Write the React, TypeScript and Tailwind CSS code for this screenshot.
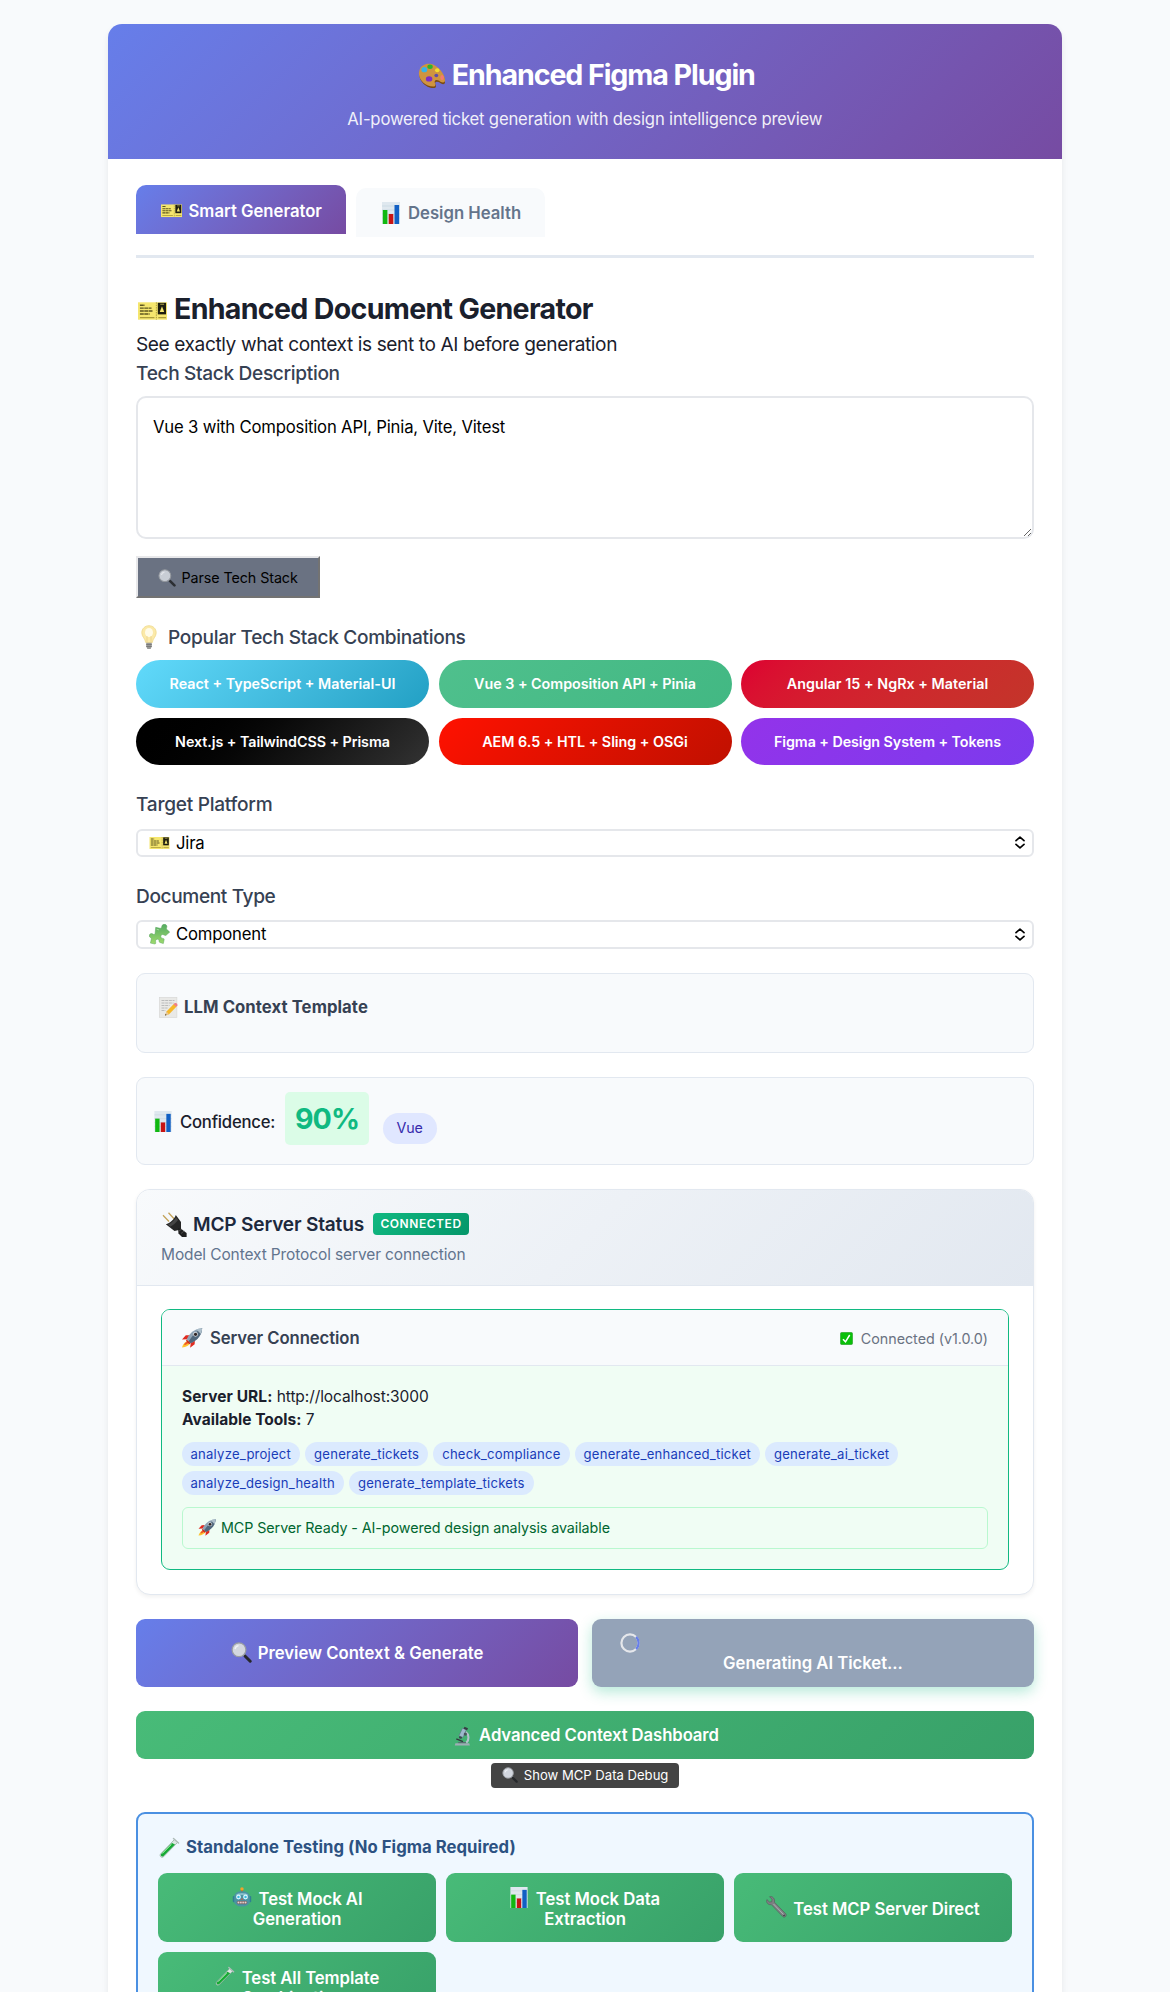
import type { ReactNode } from "react";
import clsx from "clsx";

type IconProps = { className?: string };

const Palette = ({ className }: IconProps) => (
  <svg viewBox="0 0 30 28" className={className}>
    <path d="M3 9.500C5 3 13 1 19 5c5 3 10 9.500 10 15.500 0 4-4 2.500-6 .5-2-1-5-1-4 2 1 2 1 4-2 4C9 27 0 18 3 9.500Z" fill="#7a4a12" />
    <path d="M2.500 8.500C4.500 2 13 0 19 4c5 3 10 10 10 15 0 3.500-4 2.500-6 .5-2.500-1.500-5.500-1-4.500 2 1 2.500.5 4-2 4C8.500 25.500-.5 17 2.500 8.500Z" fill="#cf9440" />
    <ellipse cx="13.500" cy="5" rx="2.800" ry="2.300" fill="#2bb52b" />
    <ellipse cx="7.500" cy="8" rx="3" ry="2.700" fill="#35b4e8" />
    <ellipse cx="12.500" cy="17.500" rx="3.400" ry="2.700" fill="#7d2fc4" />
    <ellipse cx="21" cy="8.500" rx="2.300" ry="2" fill="#f3dc2c" />
    <ellipse cx="26" cy="16" rx="1.800" ry="2.600" fill="#f47a72" />
    <ellipse cx="20" cy="14" rx="2" ry="1.800" fill="#5d4bab" />
  </svg>
);

const Ticket = ({ className }: IconProps) => (
  <svg viewBox="0 0 30 18" className={className}>
    <rect width="30" height="18" fill="#f5e66e" />
    <path d="M2 3h5M2 6h12M2 9h13M2 12h10" stroke="#5d5620" strokeWidth="1.500" strokeDasharray="4 .5" />
    <path d="M2 15.800h15M21 15.800h8" stroke="#a99a3c" strokeWidth="1.200" />
    <path d="M19 0v18" stroke="#a99a3c" strokeWidth="1" strokeDasharray="1.500 1" />
    <rect x="20.500" y="0.500" width="8.500" height="12" fill="#1d1d10" />
    <path d="M22.500 10 24.800 4l2.300 6Z" fill="#f5e66e" />
    <path d="M23 2h4" stroke="#b9ad50" strokeWidth="1" />
  </svg>
);

const Chart = ({ className }: IconProps) => (
  <svg viewBox="0 0 18 22" className={className}>
    <rect width="18" height="22" fill="#dfe8ef" />
    <path d="M0 4h18M0 8h18M0 12h18M0 16h18" stroke="#c5d3de" strokeWidth="0.600" />
    <rect x="0.800" y="8" width="4.600" height="14" fill="#11b811" />
    <rect x="6.700" y="12" width="4.600" height="10" fill="#c81414" />
    <rect x="12.500" y="3" width="4.600" height="19" fill="#1260c4" />
  </svg>
);

const Magnifier = ({ className }: IconProps) => (
  <svg viewBox="0 0 21 21" className={className}>
    <path d="m12.500 12.500 2 1.600" stroke="#8f949a" strokeWidth="2.400" />
    <path d="m14.200 14.200 5 5" stroke="#26282b" strokeWidth="3" strokeLinecap="round" />
    <circle cx="8" cy="7.800" r="6.900" fill="#d3d7df" stroke="#999da2" strokeWidth="1.200" />
    <path d="M4 7a4.200 4.200 0 0 1 3.500-3.400" stroke="#f1f3f6" strokeWidth="1.400" fill="none" />
  </svg>
);

const Bulb = ({ className }: IconProps) => (
  <svg viewBox="0 0 16 25" className={className}>
    <path d="M8 .7c4 0 7.200 3 7.200 7 0 4.300-3.600 5.800-3.900 9.800H4.700C4.400 13.500.8 12 .8 7.700c0-4 3.200-7 7.200-7Z" fill="#fbe9a8" stroke="#efd98a" strokeWidth="0.800" />
    <ellipse cx="8" cy="7.500" rx="4" ry="4.500" fill="#fffbe8" />
    <path d="M6 11v6M10 11v6" stroke="#e8cf86" strokeWidth="0.700" />
    <path d="M5.200 17.800h5.600v3.700L9.600 24H6.400l-1.200-2.500Z" fill="#9a9a98" />
    <path d="M5.200 19.500h5.600M5.200 21.500h5.600" stroke="#6d6d6b" strokeWidth="0.700" />
  </svg>
);

const Puzzle = ({ className }: IconProps) => (
  <svg viewBox="0 0 22 22" className={className}>
    <defs>
      <linearGradient id="puzzle" x1="0" y1="0" x2="0" y2="1">
        <stop offset="0" stopColor="#55ab62" />
        <stop offset="1" stopColor="#9edb6c" />
      </linearGradient>
    </defs>
    <path
      d="M7 3.500 11.500 4.500c1.600.2 1.700-1.200 2-2.500.5-2 4.600-2.400 5.200.2.300 1.600-1 2.300-.2 3.300l3.200 3-3.800 3.300c-1.200.8-2.300-.8-3.700-.8-2 .2-2.600 3-.7 3.800 1.300.5 2.400.1 2.400 1.500L15 20.500l-3.700-1.200c-1.300-.6-.4-2-1.200-3-1.500-1.200-3.600.3-3.200 2 .2 1.200.4 2.400-.6 2.700L1.500 20l1-4.500c0-1.600-2-1.200-2.200-3-.2-2 2.200-3.200 3.700-2 1 .8 2 .6 2.400-.5Z"
      fill="url(#puzzle)"
      stroke="#55a35a"
      strokeWidth="0.500"
    />
    <path d="M8 5.500 10.500 6.200" stroke="#a6dba0" strokeWidth="1" />
  </svg>
);

const Memo = ({ className }: IconProps) => (
  <svg viewBox="0 0 19 21" className={className}>
    <rect x="0.400" y="0.400" width="17.500" height="20" fill="#e9e9e7" stroke="#d5d5d3" strokeWidth="0.600" />
    <path d="M2.500 3.500h13M2.500 6h12M2.500 8.500h8M2.500 11h6M2.500 13.500h4" stroke="#b4b5b5" strokeWidth="0.900" strokeDasharray="3 .7" />
    <path d="m6 18.500 1.500-4L14.800 7l2.800 2.600-7.500 7.600Z" fill="#f6b829" />
    <path d="m14.500 7.300 1.300-1.200c1.300-.8 3.200 1 2.600 2.300l-1.200 1.300Z" fill="#ef7f86" />
    <path d="m6 18.500 1.500-4 2.500 2.700Z" fill="#e6c79a" />
    <path d="m6 18.500.6-1.500 1 1Z" fill="#2c2c2c" />
  </svg>
);

const Plug = ({ className }: IconProps) => (
  <svg viewBox="0 0 25 25" className={className}>
    <path d="m1 3.200 6 6.300M6.500.8l6 6.500" stroke="#c3a35a" strokeWidth="1.300" />
    <path d="M3.800 12.200C8 11.500 12.500 7 13.800 3l5.200 7v7.500l-6.500 1.500Z" fill="#262626" />
    <path d="M6 12.500C9.500 11 12.500 8 14 5.500l2 2.600c-2 2.800-5 5.400-8 6.700Z" fill="#454545" />
    <path d="m16 16 4 1.500 4.600 3.500v4h-4.600l-3.500-3.600Z" fill="#1f1f1f" />
    <path d="m17 19 3-2M19 21.500l3.200-2.500" stroke="#5a5a5a" strokeWidth="0.700" />
  </svg>
);

const Rocket = ({ className }: IconProps) => (
  <svg viewBox="0 0 22 21" className={className}>
    <path d="M7 13.500c-2.500.5-5.500 3-6.500 7 4.500-.5 7.500-2.500 8.500-4.500Z" fill="#ffc42e" />
    <path d="M6.500 14c-1.800.7-3.300 2-3.800 4 2.500-.4 4-1.500 5-3Z" fill="#f0542c" />
    <path d="M8.500 7.500 4.500 7.700.5 12l5.500-.2ZM14 13l-.2 4-4.800 3.700.8-5.500Z" fill="#e02b20" />
    <path d="M21.700.3C15 .6 8.500 4.500 5.500 12l4 4C17 13 21.400 7 21.700.3Z" fill="#8fa3b5" />
    <path d="M21.700.3C17 2.200 12 7 7.500 14l2 2C17 13 21.400 7 21.700.3Z" fill="#50677c" />
    <path d="M21.700.3c-2.500.1-4.400.6-6 1.300l4.600 4.800c.8-2 1.300-4 1.400-6.100Z" fill="#aebfcb" />
    <circle cx="14.700" cy="6.600" r="2.500" fill="#d9dee2" />
    <circle cx="14.700" cy="6.600" r="1.700" fill="#2e2526" />
    <path d="m5.500 12 4 4-1.400 1L4.700 13.500Z" fill="#c72a1f" />
  </svg>
);

const Check = ({ className }: IconProps) => (
  <svg viewBox="0 0 13 13" className={className}>
    <rect x="0.300" y="0.300" width="12.400" height="12.400" rx="1.800" fill="#0abf0a" stroke="#3c9e3c" strokeWidth="0.600" />
    <path d="m3 7.200 2.500 2.600L9.700 3" stroke="#ffffff" strokeWidth="1.500" fill="none" />
  </svg>
);

const Microscope = ({ className }: IconProps) => (
  <svg viewBox="0 0 17 21" className={className}>
    <path d="M8.500 2.300 12.500 4 9 12 4.800 10.200Z" fill="#9db8cc" stroke="#5c7284" strokeWidth="0.600" />
    <path d="m10.600.8 3.700 1.500-1 2.200-3.700-1.500Z" fill="#363c42" />
    <path d="m5.400 10.500 2.700 1.200-.9 2-2.600-1.200Z" fill="#3b444c" />
    <path d="M12 6.500c3.400 2.400 3.800 8 .5 11" stroke="#b3c2cb" strokeWidth="2.200" fill="none" />
    <path d="m2 13.500 7 3" stroke="#31383e" strokeWidth="1.500" />
    <circle cx="11.500" cy="8.500" r="1.700" fill="#49545c" />
    <path d="M1 18h14.500l.8 2.600H.4Z" fill="#9fadb5" />
    <path d="M4 16.800h8V18H4Z" fill="#5c6a73" />
  </svg>
);

const TestTube = ({ className }: IconProps) => (
  <svg viewBox="0 0 21 21" className={className}>
    <path d="m15.500 2.500 3 3L4.500 19.800c-2 1.500-4.300-.7-3-2.800Z" fill="#dbe6e2" stroke="#8da89b" strokeWidth="0.700" />
    <path d="m13 6 3 1.500L4.300 19.200c-1.500 1-3.200-.6-2.200-2.200Z" fill="#15a834" />
    <path d="m12.500 7.500-9 9" stroke="#7be58a" strokeWidth="1" />
    <path d="m14.500 1.500 5 4.500" stroke="#aebbb8" strokeWidth="1.500" strokeLinecap="round" />
  </svg>
);

const Robot = ({ className }: IconProps) => (
  <svg viewBox="0 0 20 21" className={className}>
    <path d="M10 2v4" stroke="#c25b28" strokeWidth="1.600" />
    <circle cx="10" cy="2" r="1.800" fill="#f3a229" />
    <rect x="0.300" y="9.500" width="2.500" height="6.500" rx="1" fill="#2f7f92" />
    <rect x="17.200" y="9.500" width="2.500" height="6.500" rx="1" fill="#2f7f92" />
    <path d="M1.800 10.500C1.800 6.500 5.500 4.500 10 4.500s8.200 2 8.200 6V15c0 3.500-3.500 5.500-8.200 5.500S1.800 18.500 1.800 15Z" fill="#4b93a3" />
    <path d="M3.500 8.500C5 5.500 15 5.500 16.500 8.500Z" fill="#86bfc9" />
    <circle cx="6.300" cy="10.500" r="2.500" fill="#dff9ff" />
    <circle cx="13.700" cy="10.500" r="2.500" fill="#dff9ff" />
    <circle cx="6.300" cy="10.500" r="1.300" fill="#36bce0" />
    <circle cx="13.700" cy="10.500" r="1.300" fill="#36bce0" />
    <path d="m10 11.500 1.200 2H8.800Z" fill="#e1503c" />
    <rect x="5" y="15" width="10" height="2.600" rx="1" fill="#e9d4d0" stroke="#7a4a46" strokeWidth="0.600" />
    <path d="M7.500 15v2.600M10 15v2.600M12.500 15v2.600" stroke="#6b4b4b" strokeWidth="0.600" />
  </svg>
);

const Wrench = ({ className }: IconProps) => (
  <svg viewBox="0 0 21 22" className={className}>
    <path
      d="M3.600.7 6 3.200 5.800 5.800 3.400 6 .9 3.600C-.3 6.400 2.300 9.300 5.300 8.600l11.500 12c1.800 1.500 4.300-.6 3-2.700L8.400 6.200C9.300 3 6.600-.2 3.600.7Z"
      fill="#7d8083"
      stroke="#55585b"
      strokeWidth="0.600"
    />
    <path d="m7.500 8 10.500 11" stroke="#aeb1b3" strokeWidth="1" />
    <circle cx="18" cy="19.300" r="0.900" fill="#3d4042" />
  </svg>
);

const Chevrons = () => (
  <svg viewBox="0 0 10 13" className="h-[13px] w-[10px]" fill="none" stroke="#000" strokeWidth="1.700" strokeLinecap="round" strokeLinejoin="round">
    <path d="M1 4.600 5 1.200l4 3.400M1 8.400l4 3.400 4-3.400" />
  </svg>
);

const Spinner = () => (
  <svg viewBox="0 0 20 20" className="size-5" fill="none" strokeWidth="2.200">
    <circle cx="10" cy="10" r="8.600" stroke="#e5e7eb" />
    <path d="M16.100 3.900a8.600 8.600 0 0 1 0 12.200" stroke="#667eea" />
  </svg>
);

const Select = ({ icon, children }: { icon: ReactNode; children: ReactNode }) => (
  <div className="flex h-[28.500px] items-center rounded-md border-2 border-gray-200 bg-white pr-[7.500px] pl-[11px] text-[16.700px] tracking-[-0.200px] text-black">
    {icon}
    <span className="ml-[6px] flex-1 pt-px">{children}</span>
    <Chevrons />
  </div>
);

const stacks = [
  { label: "React + TypeScript + Material-UI", look: "from-[#61dafb] to-[#21a0c4] tracking-[0px]" },
  { label: "Vue 3 + Composition API + Pinia", look: "from-[#4fc08d] to-[#42b883] tracking-[-0.02px]" },
  { label: "Angular 15 + NgRx + Material", look: "from-[#dd0031] to-[#c3352a] tracking-[0.04px]" },
  { label: "Next.js + TailwindCSS + Prisma", look: "from-[#000000] to-[#333333] tracking-[-0.06px]" },
  { label: "AEM 6.5 + HTL + Sling + OSGi", look: "from-[#ff1100] to-[#c01000] tracking-[-0.01px]" },
  { label: "Figma + Design System + Tokens", look: "from-[#9333ea] to-[#7c3aed] tracking-[-0.07px]" },
];

const tools = [
  "analyze_project",
  "generate_tickets",
  "check_compliance",
  "generate_enhanced_ticket",
  "generate_ai_ticket",
  "analyze_design_health",
  "generate_template_tickets",
];

const TestButton = ({ children }: { children: ReactNode }) => (
  <button className="flex h-[69px] flex-col items-center justify-center rounded-[9px] bg-linear-135 from-[#48bb78] to-[#38a169] pt-[3px] text-[16.700px] leading-5 font-semibold tracking-[-0.050px] text-white">
    {children}
  </button>
);

const FirstLine = ({ icon, gap = "gap-[7px]", children }: { icon: ReactNode; gap?: string; children: ReactNode }) => (
  <span className={clsx("flex items-center", gap)}>
    <span className="-mt-1 flex h-5 items-center">{icon}</span>
    {children}
  </span>
);

export default function App() {
  return (
    <div className="h-[1992px] overflow-hidden bg-[#f8fafc] pt-6 font-[Inter,sans-serif] text-[#1a202c]">
      <main className="ml-[107.500px] h-[2100px] w-[954.500px] overflow-hidden rounded-[14px] bg-white shadow-[0_4px_7px_rgba(0,0,0,0.07)]">
        <header className="flex h-[134.500px] flex-col items-center bg-linear-135 from-[#667eea] to-[#764ba2] pt-[34.500px] text-white">
          <h1 className="flex h-[34px] items-center text-[28.600px] font-bold tracking-[-1.080px]">
            <Palette className="mr-[6px] ml-[2px] h-[27px] w-[29px]" />
            Enhanced Figma Plugin
          </h1>
          <p className="mt-[16px] h-5 text-[16.700px] leading-5 tracking-[-0.190px] opacity-90">
            AI-powered ticket generation with design intelligence preview
          </p>
        </header>

        <div className="pt-[26.500px] pr-[28px] pl-[28.500px]">
          <nav className="flex h-[73px] items-start gap-[10px] border-b-[3px] border-[#e2e8f0] text-[16.700px] font-semibold">
            <button className="flex h-[49px] w-[210px] items-center rounded-t-[10px] bg-linear-135 from-[#667eea] to-[#764ba2] pt-[3px] pl-[25px] text-white">
              <Ticket className="mr-[6.500px] h-[13.500px] w-[21px]" />
              <span className="pt-px">Smart Generator</span>
            </button>
            <button className="mt-[2.500px] flex h-[49px] w-[189px] items-center rounded-t-[10px] bg-[#f8fafc] pt-[3px] pl-[26px] text-[#64748b]">
              <Chart className="-mt-[2px] mr-[8px] h-[22px] w-[18px]" />
              <span>Design Health</span>
            </button>
          </nav>

          <h2 className="mt-[34px] flex h-[34px] items-center text-[28.600px] font-bold tracking-[-0.700px]">
            <Ticket className="mt-[3px] mr-[7px] ml-[2px] h-[18px] w-[29px]" />
            Enhanced Document Generator
          </h2>
          <p className="mt-[2.500px] h-[30px] text-[19.100px] leading-[30px] tracking-[-0.400px]">
            See exactly what context is sent to AI before generation
          </p>
          <label className="block h-[29px] text-[19.100px] leading-[29px] font-medium tracking-[-0.340px] text-gray-700">
            Tech Stack Description
          </label>
          <textarea
            defaultValue="Vue 3 with Composition API, Pinia, Vite, Vitest"
            className="mt-[8.500px] block h-[143px] w-full rounded-[10px] border-2 border-gray-200 bg-white px-[15px] pt-[17px] text-[16.700px] leading-[25px] tracking-[-0.190px] text-black"
          />
          <button className="mt-[17px] flex h-[42px] w-[184px] items-center border-2 border-t-[#e8e8ea] border-r-[#737373] border-b-[#737373] border-l-[#e8e8ea] bg-gray-500 pt-px pl-5 text-[14.300px] tracking-[-0.080px] text-black">
            <Magnifier className="mr-[5.500px] size-[18px] opacity-90" />
            Parse Tech Stack
          </button>
          <h3 className="mt-[24px] flex h-[30px] items-center text-[19.100px] font-medium tracking-[-0.320px] text-gray-700">
            <Bulb className="mr-[11px] ml-[5px] h-[25px] w-[16px]" />
            Popular Tech Stack Combinations
          </h3>
          <div className="mt-[8px] grid grid-cols-3 gap-x-[9.500px] gap-y-[10px]">
            {stacks.map((s) => (
              <button key={s.label} className={clsx("h-[47.500px] rounded-full bg-linear-135 text-[14.300px] font-semibold text-white", s.look)}>
                {s.label}
              </button>
            ))}
          </div>

          <label className="mt-[24px] block h-[30px] text-[19.100px] leading-[30px] font-medium tracking-[-0.260px] text-gray-700">
            Target Platform
          </label>
          <div className="mt-[9.500px]">
            <Select icon={<Ticket className="h-[12px] w-[21px]" />}>Jira</Select>
          </div>
          <label className="mt-[24px] block h-[30px] text-[19.100px] leading-[30px] font-medium tracking-[-0.380px] text-gray-700">
            Document Type
          </label>
          <div className="mt-[9px]">
            <Select icon={<Puzzle className="size-[21px]" />}>Component</Select>
          </div>

          <section className="mt-6 h-20 rounded-[9px] border border-[#e2e8f0] bg-[#f8fafc] pt-[22px] pr-[21px] pl-[22px]">
            <h4 className="flex h-6 items-center text-[16.700px] font-bold tracking-[0.070px] text-gray-700">
              <Memo className="mr-[6px] h-[21px] w-[19px]" />
              LLM Context Template
            </h4>
          </section>

          <section className="mt-6 flex h-[88px] items-start rounded-[9px] border border-[#e2e8f0] bg-[#f8fafc] px-[17px] pt-[14px] text-[16.700px]">
            <Chart className="mt-[19px] h-[21px] w-[18px]" />
            <span className="mt-[20px] ml-[8px] leading-5 font-medium tracking-[-0.230px]">Confidence:</span>
            <span className="ml-[10px] flex h-[53px] w-[84px] items-center justify-center rounded-[5px] bg-green-100 pt-[3px] text-[28.600px] font-bold tracking-[-0.900px] text-[#10b981]">
              90%
            </span>
            <span className="mt-[21px] ml-[13.500px] flex h-[31px] w-[54px] items-center justify-center rounded-full bg-indigo-100 text-[14.300px] tracking-[-0.100px] text-indigo-800">
              Vue
            </span>
          </section>

          <section className="mt-6 h-[406px] overflow-hidden rounded-[14px] border border-[#e2e8f0] bg-white shadow-[0_2px_4px_rgba(0,0,0,0.06)]">
            <div className="h-[96px] border-b border-[#e2e8f0] bg-linear-135 from-[#f8fafc] to-[#e2e8f0] px-6 pt-[20.500px]">
              <div className="flex h-7 items-center">
                <Plug className="mr-[6px] ml-px size-[25px]" />
                <h3 className="text-[19.100px] font-semibold tracking-[-0.180px] text-slate-800">MCP Server Status</h3>
                <span className="ml-[9px] flex h-[22px] w-[96px] items-center justify-center rounded-[4px] bg-linear-135 from-[#10b981] to-[#059669] text-[12px] font-semibold tracking-[0.550px] text-white">
                  CONNECTED
                </span>
              </div>
              <p className="mt-[6.500px] text-[15.500px] leading-5 tracking-[-0.120px] text-slate-500">Model Context Protocol server connection</p>
            </div>

            <div className="mx-6 mt-[23.500px] h-[260.500px] overflow-hidden rounded-[9px] border border-[#10b981] bg-[#f0fdf4]">
              <div className="flex h-[55.500px] items-center border-b border-[#e2e8f0] bg-[#f8fafc] px-5 pt-[2px]">
                <Rocket className="mr-[7px] -ml-px h-[20px] w-[22px]" />
                <h4 className="flex-1 pt-px text-[16.700px] font-semibold tracking-[-0.080px] text-gray-700">Server Connection</h4>
                <Check className="mr-[8px] size-[13px]" />
                <span className="text-[14.300px] tracking-[-0.020px] text-gray-500">Connected (v1.0.0)</span>
              </div>
              <div className="px-5 pt-[19.500px]">
                <p className="text-[15.500px] leading-[23px] tracking-[-0.080px]">
                  <strong className="font-bold tracking-[0.070px]">Server URL:</strong> http://localhost:3000
                </p>
                <p className="text-[15.500px] leading-[23px]">
                  <strong className="font-bold tracking-[0.020px]">Available Tools:</strong> 7
                </p>
                <div className="-ml-[0.500px] mt-[11px] flex flex-wrap gap-[5px]">
                  {tools.map((t) => (
                    <span key={t} className="h-6 rounded-full bg-blue-100 px-[9px] text-[13.100px] leading-6 tracking-[0.220px] text-blue-800">
                      {t}
                    </span>
                  ))}
                </div>
                <div className="mt-[11.500px] flex h-[42.500px] items-center rounded-md border border-green-200 pl-[15px] text-[14.300px] tracking-[-0.070px] text-green-800">
                  <Rocket className="mr-[5px] h-[17px] w-[18px]" />
                  MCP Server Ready - AI-powered design analysis available
                </div>
              </div>
            </div>
          </section>

          <div className="mt-[24px] grid grid-cols-[442px_442px] gap-[14px] text-[16.700px] font-semibold text-white">
            <button className="flex h-[68px] items-center justify-center rounded-[9px] bg-linear-135 from-[#667eea] to-[#764ba2] pt-[2px]">
              <Magnifier className="-mt-[2px] mr-[6px] size-[21px]" />
              Preview Context &amp; Generate
            </button>
            <button className="flex h-[68px] flex-col rounded-[9px] bg-[#94a3b8] px-[28px] pt-[14px] shadow-[0_5px_14px_rgba(16,185,129,0.3)]">
              <Spinner />
              <span className="self-center leading-5 tracking-[-0.030px]">Generating AI Ticket...</span>
            </button>
          </div>
          <button className="mt-6 flex h-[48.500px] w-full items-center justify-center rounded-[9px] bg-linear-135 from-[#48bb78] to-[#38a169] pt-[2px] text-[16.700px] font-semibold tracking-[-0.080px] text-white">
            <Microscope className="mr-[8px] ml-[3px] h-[20px] w-[17px]" />
            Advanced Context Dashboard
          </button>
          <div className="mt-[3.500px] flex justify-center">
            <button className="flex h-[25.500px] w-[187.500px] items-center rounded-[4px] bg-[#444444] pt-[2px] pl-[11px] text-[13.100px] text-white">
              <Magnifier className="-mt-[2px] mr-[5.500px] size-[16px]" />
              Show MCP Data Debug
            </button>
          </div>

          <section className="mt-[24px] h-[300px] rounded-[9px] border-2 border-[#4a90e2] bg-[#f0f8ff] px-5 pt-[21.500px]">
            <h4 className="flex h-6 items-center text-[16.700px] font-bold tracking-[0.050px] text-[#2c5282]">
              <TestTube className="mr-[6px] ml-px size-[21px]" />
              Standalone Testing (No Figma Required)
            </h4>
            <div className="mt-[13.500px] grid grid-cols-3 gap-[10px]">
              <TestButton>
                <FirstLine icon={<Robot className="h-[20px] w-[20px]" />}>Test Mock AI</FirstLine>
                <span>Generation</span>
              </TestButton>
              <TestButton>
                <FirstLine gap="gap-[8px]" icon={<Chart className="h-[21px] w-[18px]" />}>Test Mock Data</FirstLine>
                <span>Extraction</span>
              </TestButton>
              <TestButton>
                <FirstLine gap="gap-[6px]" icon={<Wrench className="h-[22px] w-[21px]" />}>Test MCP Server Direct</FirstLine>
              </TestButton>
              <TestButton>
                <FirstLine icon={<TestTube className="size-[20px]" />}>Test All Template</FirstLine>
                <span>Combinations</span>
              </TestButton>
            </div>
          </section>
        </div>
      </main>
    </div>
  );
}
